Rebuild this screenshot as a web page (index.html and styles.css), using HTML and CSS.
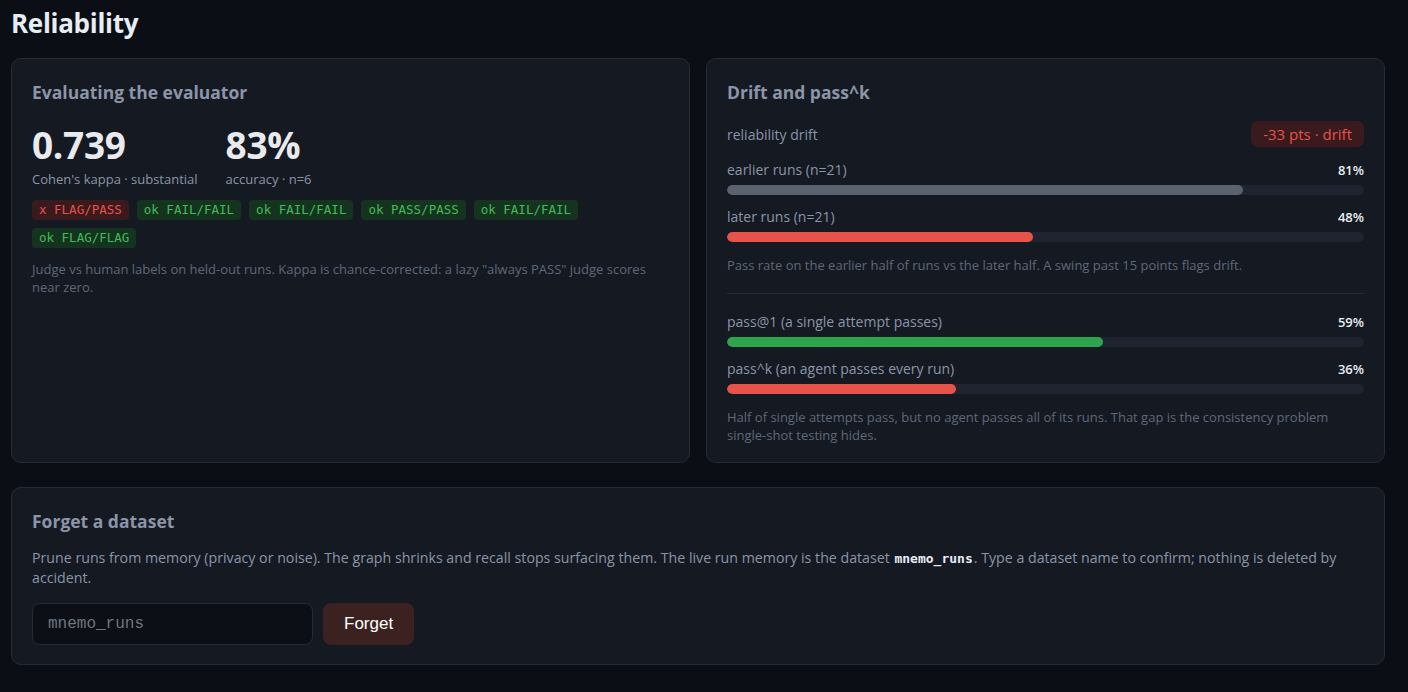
FILE: index.html
```html
<!DOCTYPE html>
<html>
<head>
<meta name="viewport" content="width=device-width, initial-scale=1.0">
<title>Reliability</title>
<link rel="stylesheet" href="styles.css">
</head>
<body>
  <h1 class="page_title">Reliability</h1>

  <div class="card_row">
    <!-- judge vs human agreement -->
    <div class="card">
      <h2 class="card_title">Evaluating the evaluator</h2>
      <div class="stat_row">
        <div class="stat">
          <div class="stat_value">0.739</div>
          <div class="stat_label">Cohen's kappa &middot; substantial</div>
        </div>
        <div class="stat">
          <div class="stat_value">83%</div>
          <div class="stat_label">accuracy &middot; n=6</div>
        </div>
      </div>
      <div class="tag_list">
        <span class="tag tag_bad">x FLAG/PASS</span>
        <span class="tag tag_ok">ok FAIL/FAIL</span>
        <span class="tag tag_ok">ok FAIL/FAIL</span>
        <span class="tag tag_ok">ok PASS/PASS</span>
        <span class="tag tag_ok">ok FAIL/FAIL</span>
        <span class="tag tag_ok">ok FLAG/FLAG</span>
      </div>
      <p class="note">Judge vs human labels on held-out runs. Kappa is chance-corrected: a lazy "always PASS" judge scores near zero.</p>
    </div>

    <!-- drift + pass^k -->
    <div class="card">
      <h2 class="card_title">Drift and pass^k</h2>
      <div class="drift_row">
        <span class="drift_label">reliability drift</span>
        <span class="pill_bad">-33 pts &middot; drift</span>
      </div>

      <div class="meter">
        <div class="meter_head"><span>earlier runs (n=21)</span><span class="meter_pct">81%</span></div>
        <div class="meter_track"><div class="meter_fill fill_gray" style="width:81%"></div></div>
      </div>
      <div class="meter">
        <div class="meter_head"><span>later runs (n=21)</span><span class="meter_pct">48%</span></div>
        <div class="meter_track"><div class="meter_fill fill_red" style="width:48%"></div></div>
      </div>
      <p class="note">Pass rate on the earlier half of runs vs the later half. A swing past 15 points flags drift.</p>

      <hr class="divider">

      <div class="meter">
        <div class="meter_head"><span>pass@1 (a single attempt passes)</span><span class="meter_pct">59%</span></div>
        <div class="meter_track"><div class="meter_fill fill_green" style="width:59%"></div></div>
      </div>
      <div class="meter">
        <div class="meter_head"><span>pass^k (an agent passes every run)</span><span class="meter_pct">36%</span></div>
        <div class="meter_track"><div class="meter_fill fill_red" style="width:36%"></div></div>
      </div>
      <p class="note">Half of single attempts pass, but no agent passes all of its runs. That gap is the consistency problem single-shot testing hides.</p>
    </div>
  </div>

  <!-- forget -->
  <div class="card card_wide">
    <h2 class="card_title">Forget a dataset</h2>
    <p class="body_text">Prune runs from memory (privacy or noise). The graph shrinks and recall stops surfacing them. The live run memory is the dataset <code class="inline_code">mnemo_runs</code>. Type a dataset name to confirm; nothing is deleted by accident.</p>
    <div class="forget_row">
      <input class="text_input" type="text" placeholder="mnemo_runs">
      <button class="button_danger">Forget</button>
    </div>
  </div>
</body>
</html>
```

FILE: styles.css
```css
body {
    margin: 0;
    padding: 5px 23px 24px 11px;
    background-color: #0b0e14;
    color: #c9d1d9;
    font-family: "Open Sans", "Noto Sans", Arial, sans-serif;
}

.page_title {
    margin: 0 0 17px 0;
    font-size: 26px;
    line-height: 36px;
    font-weight: 700;
    color: #e6edf3;
    letter-spacing: -0.3px;
}

.card_row {
    display: grid;
    grid-template-columns: 1fr 1fr;
    gap: 16px;
    margin-bottom: 24px;
}

/* column flex so child margins add up instead of collapsing */
.card {
    display: flex;
    flex-direction: column;
    background-color: #151922;
    border: 1px solid #262b36;
    border-radius: 10px;
    padding: 20px 20px 18px 20px;
}

.card_title {
    margin: 1px 0 12px 0;
    font-size: 17.5px;
    line-height: 24px;
    font-weight: 700;
    color: #8b95a8;
}

/* stats */
.stat_row {
    display: flex;
    gap: 28px;
    margin-top: 6px;
}
.stat_value {
    font-size: 37px;
    line-height: 46px;
    font-weight: 700;
    color: #e8eaed;
    letter-spacing: -0.3px;
}
.stat_label {
    margin-top: 3px;
    font-size: 13px;
    line-height: 16px;
    color: #8b95a8;
}

.tag_list {
    display: flex;
    flex-wrap: wrap;
    gap: 8px;
    margin-top: 13px;
}
.tag {
    font-family: "DejaVu Sans Mono", "Liberation Mono", monospace;
    font-size: 12.5px;
    line-height: 20px;
    padding: 0 7px;
    border-radius: 4px;
}
.tag_bad {
    background-color: #3a1a1c;
    color: #e5534b;
}
.tag_ok {
    background-color: #14341f;
    color: #46b95a;
}

.note {
    margin: 12px 0 0 0;
    font-size: 13px;
    line-height: 18px;
    color: #5f6878;
}
.meter + .note {
    margin-top: 2px;
}

/* drift */
.drift_row {
    display: flex;
    justify-content: space-between;
    align-items: center;
    margin: 5px 0 13px 0;
}
.drift_label {
    font-size: 14px;
    color: #8b95a8;
}
.pill_bad {
    background-color: #3a1a1c;
    color: #e5534b;
    font-size: 15px;
    line-height: 26px;
    padding: 0 12px;
    border-radius: 7px;
}

.meter {
    margin-bottom: 12px;
}
.meter_head {
    display: flex;
    justify-content: space-between;
    font-size: 14px;
    line-height: 20px;
    color: #8b95a8;
}
.meter_pct {
    font-size: 13px;
    font-weight: 600;
    color: #e6edf3;
}
.meter_track {
    margin-top: 5px;
    height: 10px;
    background-color: #1f2430;
    border-radius: 5px;
    overflow: hidden;
}
.meter_fill {
    height: 100%;
    border-radius: 5px;
}
.fill_gray { background-color: #5a6270; }
.fill_red { background-color: #e5534b; }
.fill_green { background-color: #2ea44f; }

.divider {
    width: 100%;
    border: 0;
    border-top: 1px solid #262b36;
    margin: 19px 0 18px 0;
}

/* forget */
.card_wide {
    padding-bottom: 19px;
}
.body_text {
    margin: 3px 0 15px 0;
    font-size: 14.2px;
    line-height: 20px;
    color: #8b95a8;
}
.inline_code {
    margin: 0 1px;
    font-family: "DejaVu Sans Mono", "Liberation Mono", monospace;
    font-weight: 700;
    font-size: 13px;
    line-height: 1;
    color: #e6edf3;
}
.forget_row {
    display: flex;
    gap: 10px;
}
.text_input {
    width: 281px;
    height: 42px;
    box-sizing: border-box;
    background-color: #0c0f15;
    border: 1px solid #262b36;
    border-radius: 8px;
    padding: 0 15px;
    font-family: "Liberation Mono", "DejaVu Sans Mono", monospace;
    font-size: 16px;
    color: #c9d1d9;
}
.text_input::placeholder {
    color: #6e7681;
}
.button_danger {
    height: 42px;
    padding: 0 21px;
    background-color: #3b2220;
    color: #ffffff;
    border: 0;
    border-radius: 8px;
    font-family: "Liberation Sans", Arial, sans-serif;
    font-size: 17px;
}
```
